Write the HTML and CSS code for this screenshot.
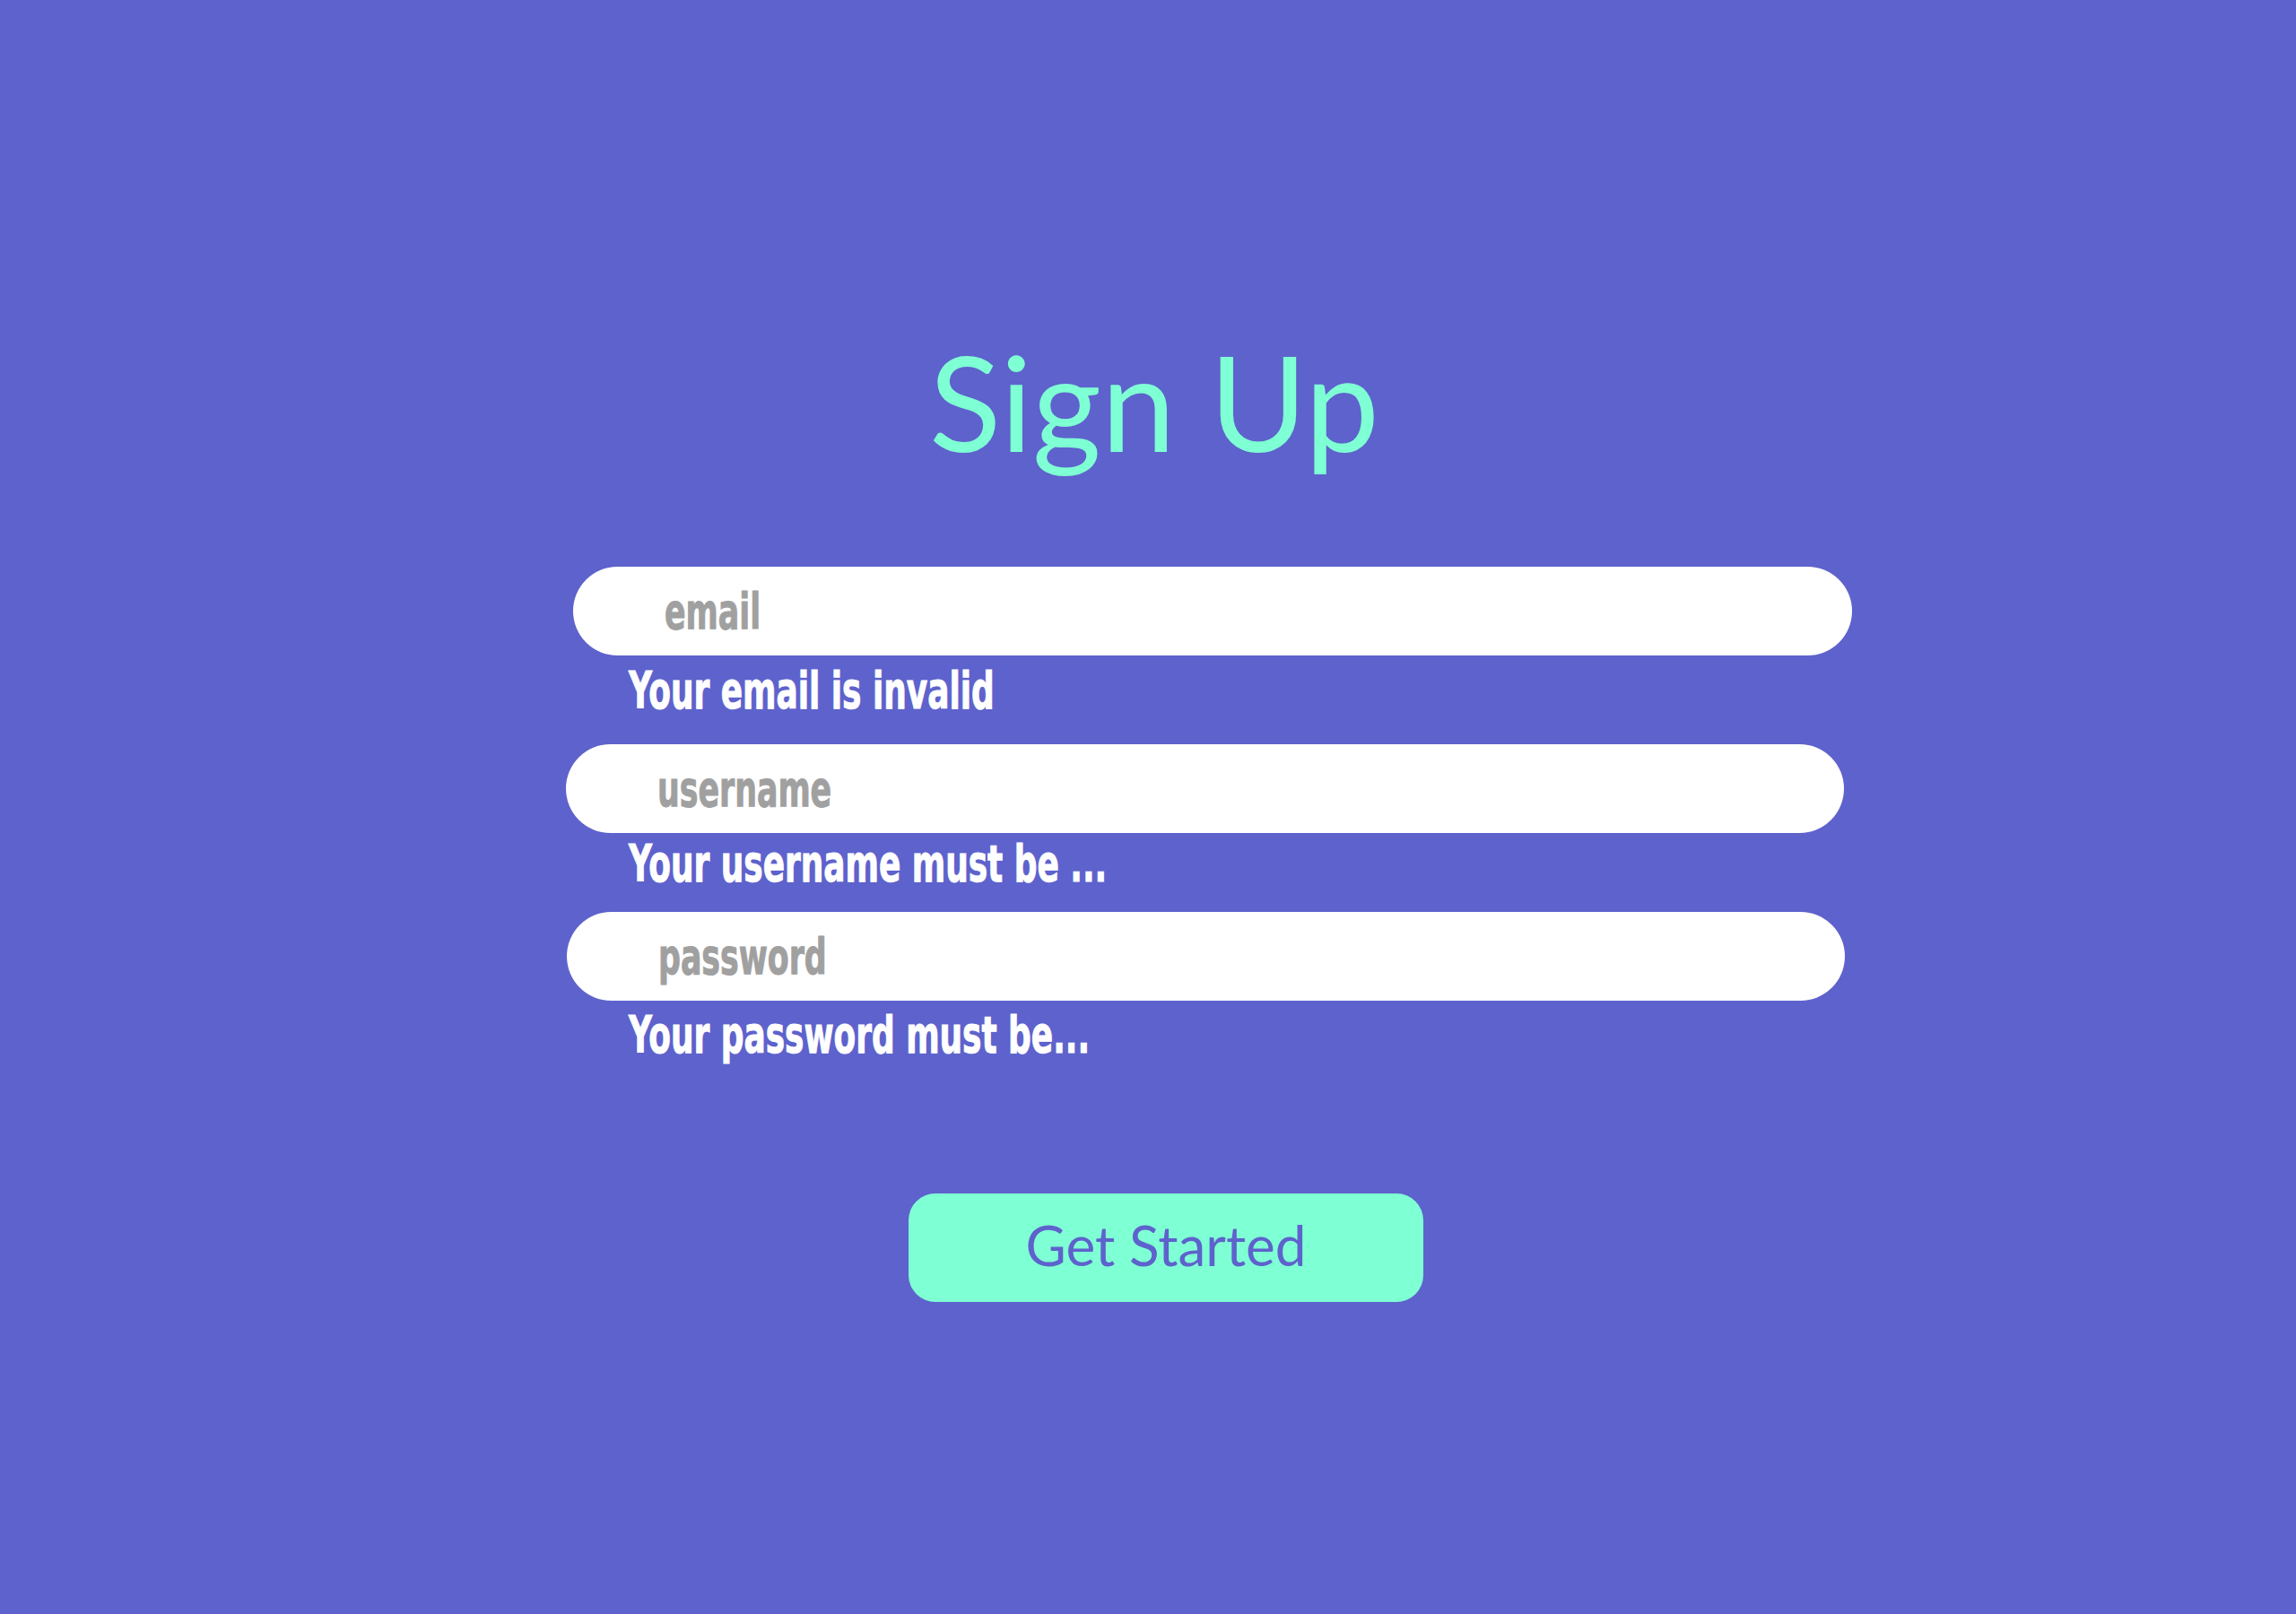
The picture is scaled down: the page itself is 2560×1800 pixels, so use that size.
FILE: index.html
```html
<!DOCTYPE html>
<html lang="en">
<head>
<meta charset="utf-8">
<title>Sign Up</title>
<link rel="stylesheet" href="styles.css">
</head>
<body>
<main class="page">
  <h1 class="title">Sign Up</h1>
  <form class="form">
    <div class="pill pill-email"><input type="email" placeholder="email"></div>
    <p class="error error-email"><span>Your email is invalid</span></p>
    <div class="pill pill-user"><input type="text" placeholder="username"></div>
    <p class="error error-user"><span>Your username must be ...</span></p>
    <div class="pill pill-pass"><input type="password" placeholder="password"></div>
    <p class="error error-pass"><span>Your password must be...</span></p>
  </form>
  <button class="btn" type="button">Get Started</button>
</main>
</body>
</html>
```
FILE: styles.css
```css
:root {
  --bg: #5e62cc;
  --aqua: #7fffd4;
  --sx-in: 0.69;
  --sx-err: 0.70;
}
html, body {
  margin: 0;
  padding: 0;
  background: var(--bg);
}
.page {
  box-sizing: border-box;
  min-height: 1800px;
  display: flex;
  flex-direction: column;
  align-items: center;
  padding: 373px 0 0 14px;
}
.title {
  margin: 0;
  font: 400 148px/1 Lato, "Noto Sans", sans-serif;
  color: var(--aqua);
}
.form {
  align-self: flex-start;
  margin: 111px 0 0 617px;
  width: 1426px;
  display: flex;
  flex-direction: column;
}
.pill {
  height: 99px;
  width: 1425px;
  background: #fff;
  border-radius: 50px;
  overflow: hidden;
}
.pill-email { margin-left: 8px; width: 1426px; }
.pill-user { margin-top: 31px; }
.pill-pass { margin-top: 25px; margin-left: 1px; }
.pill input {
  display: block;
  box-sizing: border-box;
  width: calc(100% / var(--sx-in));
  height: 100%;
  margin: 0;
  border: 0;
  outline: 0;
  background: transparent;
  padding: 0 0 0 calc(102px / var(--sx-in));
  transform: scaleX(var(--sx-in));
  transform-origin: left center;
  font-family: "DejaVu Sans Condensed", "DejaVu Sans", sans-serif;
  font-stretch: condensed;
  font-weight: 700;
  font-size: 56px;
  color: #333;
}
.pill input::placeholder {
  color: #a0a0a0;
  -webkit-text-stroke: 1px #a0a0a0;
  opacity: 1;
}
.error {
  margin: 0;
  padding-left: 70px;
  height: 57px;
  white-space: nowrap;
}
.error-email { margin-top: 11px; }
.error-user { margin-top: 6px; }
.error-pass { margin-top: 10px; }
.error span {
  display: inline-block;
  transform: scaleX(var(--sx-err));
  transform-origin: left center;
  font-family: "DejaVu Sans Condensed", "DejaVu Sans", sans-serif;
  font-stretch: condensed;
  font-weight: 700;
  font-size: 57px;
  line-height: 57px;
  color: #fff;
  -webkit-text-stroke: 1px #fff;
}
.btn {
  margin: 148px 0 0 26px;
  width: 574px;
  height: 121px;
  padding: 0 0 6px;
  border: 0;
  border-radius: 30px;
  background: var(--aqua);
  color: var(--bg);
  font: 400 62px/1.2 Lato, "Noto Sans", sans-serif;
  cursor: pointer;
}
```
